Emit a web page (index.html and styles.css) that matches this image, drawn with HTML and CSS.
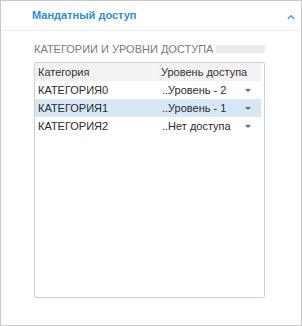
FILE: index.html
```html
<!DOCTYPE html>
<html lang="ru">
<head>
<meta charset="utf-8">
<link rel="stylesheet" href="styles.css">
</head>
<body>
<div class="panel">
  <div class="panel-head">
    <span class="panel-title">Мандатный доступ</span>
    <svg class="chev" width="8" height="6" viewBox="0 0 8 6"><path d="M0.8 5 L4 1.6 L7.2 5" fill="none" stroke="#3a97dd" stroke-width="1.3"/></svg>
  </div>
  <div class="panel-body">
    <div class="section-label"><span class="label-text">КАТЕГОРИИ И УРОВНИ ДОСТУПА</span><span class="label-bar"></span></div>
    <div class="grid">
      <div class="grid-head">
        <div class="col c1">Категория</div>
        <div class="col c2">Уровень доступа</div>
      </div>
      <div class="row">
        <div class="col c1">КАТЕГОРИЯ0</div>
        <div class="col c2"><span>..Уровень - 2</span><i class="caret"></i></div>
      </div>
      <div class="row selected">
        <div class="col c1">КАТЕГОРИЯ1</div>
        <div class="col c2"><span>..Уровень - 1</span><i class="caret"></i></div>
      </div>
      <div class="row">
        <div class="col c1">КАТЕГОРИЯ2</div>
        <div class="col c2"><span>..Нет доступа</span><i class="caret"></i></div>
      </div>
    </div>
  </div>
</div>
</body>
</html>
```
FILE: styles.css
```css
html, body { margin: 0; padding: 0; background: #fff; }
body { font-family: "Liberation Sans", Arial, sans-serif; }
.panel {
  width: 302px; height: 326px; box-sizing: border-box;
  border: 1px solid #c9c9c9; background: #fff;
  display: flex; flex-direction: column;
}
.panel-head {
  height: 30px; box-sizing: border-box;
  border-bottom: 1px solid #ececec;
  display: flex; align-items: center; justify-content: space-between;
  padding: 0 6px 0 31px;
}
.panel-title { color: #2a8fd8; font-weight: bold; font-size: 11px; margin-top: -2px; }
.chev { margin-top: 2px; }
.panel-body { padding: 11px 36px 0 33px; }
.section-label {
  display: flex; align-items: center; gap: 3px;
  color: #7a7a7a; font-size: 11px; height: 13px; white-space: nowrap;
}
.label-text { flex: none; }
.label-bar { flex: 1; height: 8px; background: #ececec; }
.grid {
  margin-top: 7px; height: 236px; box-sizing: border-box;
  border: 1px solid #cfcfcf; border-radius: 2px;
  padding-right: 3px;
  font-size: 11px; color: #2b2b2b;
}
.grid-head, .row { display: flex; height: 18px; align-items: center; }
.grid-head { background: #f2f2f2; color: #333; }
.col { box-sizing: border-box; }
.c1 { width: 118px; padding-left: 3px; }
.c2 { flex: 1; padding-left: 7px; display: flex; align-items: center; }
.grid-head .c2 { border-left: 1px solid #fff; height: 18px; line-height: 18px; }
.row .c2 { padding-left: 9px; }
.row .c2 span { flex: 1; }
.row.selected { background: #d6e8f5; }
.caret {
  width: 0; height: 0; margin-right: 10px;
  border-left: 3.5px solid transparent; border-right: 3.5px solid transparent;
  border-top: 3.5px solid #666;
}
```
